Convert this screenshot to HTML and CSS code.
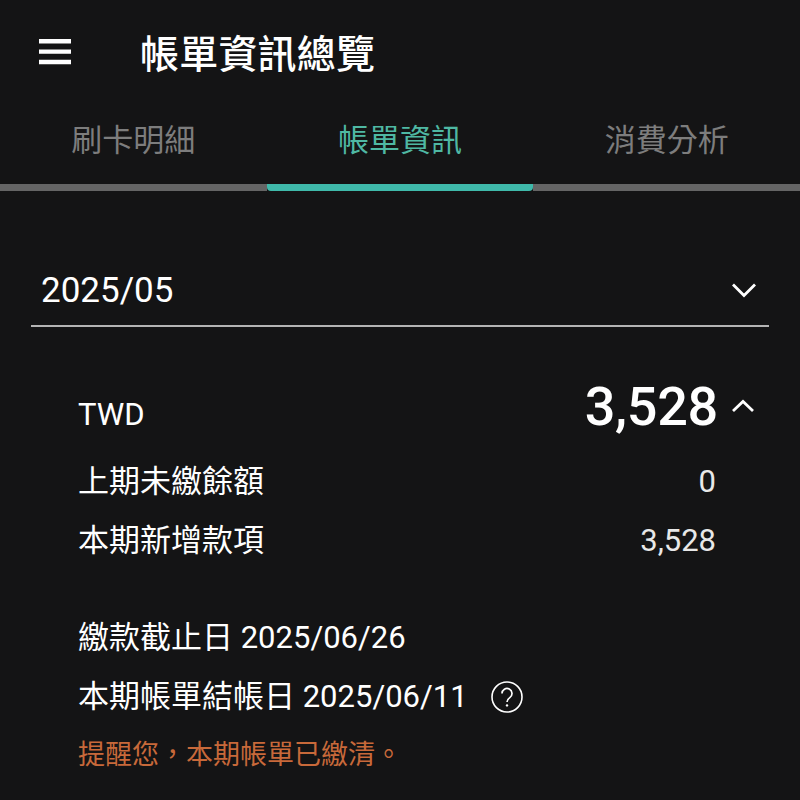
FILE: index.html
```html
<!DOCTYPE html>
<html lang="zh-Hant">
<head>
  <meta charset="UTF-8" />
  <meta name="viewport" content="width=device-width, initial-scale=1.0"/>
  <title>帳單資訊總覽</title>
  <link rel="stylesheet" href="styles.css">
</head>
<body>

<div class="topbar">
  <svg class="menu-icon" width="32" height="26" viewBox="0 0 32 26">
    <path d="M0 0h32v4.4H0zM0 10.4h32v4.4H0zM0 20.8h32v4.4H0z" fill="#fff"/>
  </svg>
  <h1>帳單資訊總覽</h1>
</div>

<div class="tabs">
  <div class="tab">刷卡明細</div>
  <div class="tab active">帳單資訊</div>
  <div class="tab">消費分析</div>
</div>

<div class="month-select">
  <span>2025/05</span>
  <svg width="26" height="16" viewBox="0 0 26 16">
    <path d="M2 2.5l11 11 11-11" fill="none" stroke="#fff" stroke-width="2.8"/>
  </svg>
</div>

<div class="summary">
  <div class="total-row">
    <span class="currency">TWD</span>
    <span class="total">3,528</span>
    <svg class="total-arrow" width="24" height="14" viewBox="0 0 24 14">
      <path d="M2 12L12 2.5 22 12" fill="none" stroke="#fff" stroke-width="2.8"/>
    </svg>
  </div>
  <div class="line"><span>上期未繳餘額</span><span class="num">0</span></div>
  <div class="line"><span>本期新增款項</span><span class="num">3,528</span></div>

  <div class="dates">
    <div class="date"><span>繳款截止日 2025/06/26</span></div>
    <div class="date">
      <span>本期帳單結帳日 2025/06/11</span>
      <svg class="help" width="32" height="32" viewBox="0 0 32 32">
        <circle cx="16" cy="16" r="15" fill="none" stroke="#fff" stroke-width="1.6"/>
        <path d="M11 12.5a5 5 0 1 1 7.8 4.1c-1.8 1.2-2.8 2.2-2.8 4.4" fill="none" stroke="#fff" stroke-width="1.7"/>
        <circle cx="16" cy="24.4" r="1.2" fill="#fff"/>
      </svg>
    </div>
    <div class="notice">提醒您，本期帳單已繳清。</div>
  </div>
</div>

</body>
</html>
```

FILE: styles.css
```css
body {
  font-family: Roboto, 'Noto Sans CJK TC', sans-serif;
  background: #141415;
  color: #fff;
  margin: 0; padding: 0;
  height: 800px;
  overflow: hidden;
}
.topbar {
  display: flex; align-items: center;
  height: 100px; padding: 4px 0 0 39px;
  box-sizing: border-box;
}
.menu-icon { margin-right: 69px; }
h1 {
  margin: -3px 0 0 0; font-size: 39px; font-weight: 500;
  letter-spacing: 0.2px;
}
.tabs {
  display: flex;
}
.tab {
  flex: 1; height: 91px; padding-top: 19px; box-sizing: border-box;
  text-align: center; font-size: 31px; color: #7d7d7d;
  border-bottom: 7px solid #656565;
  line-height: 44px;
}
.tab.active {
  color: #4fb8a3;
  border-bottom-color: #3fb9aa;
  border-radius: 0 0 4px 4px;
}
.month-select {
  display: flex; justify-content: space-between; align-items: center;
  margin: 76px 31px 0; padding: 0 12px 12px 10px;
  height: 60px;
  box-sizing: border-box;
  border-bottom: 2px solid #b4b4b4;
  font-size: 35px;
}
.summary { padding: 0 42px 0 78px; }
.total-row {
  display: flex; align-items: center;
  margin: 49px 0 16px; height: 60px;
}
.currency { font-size: 31px; margin-top: 16px; flex: 1; }
.total { font-size: 54px; font-weight: 500; letter-spacing: -0.3px; }
.total-arrow { margin: 0 3px 0 13px; }
.line {
  display: flex; justify-content: space-between;
  font-size: 31px; line-height: 59px; padding-right: 42px;
}
.num { color: #e8e8e8; }
.dates { margin-top: 38px; font-size: 31px; }
.date {
  display: flex; align-items: center; height: 59px; line-height: 59px;
}
.help { margin-left: 23px; }
.notice { color: #c8693a; font-size: 27px; line-height: 59px; }
```
